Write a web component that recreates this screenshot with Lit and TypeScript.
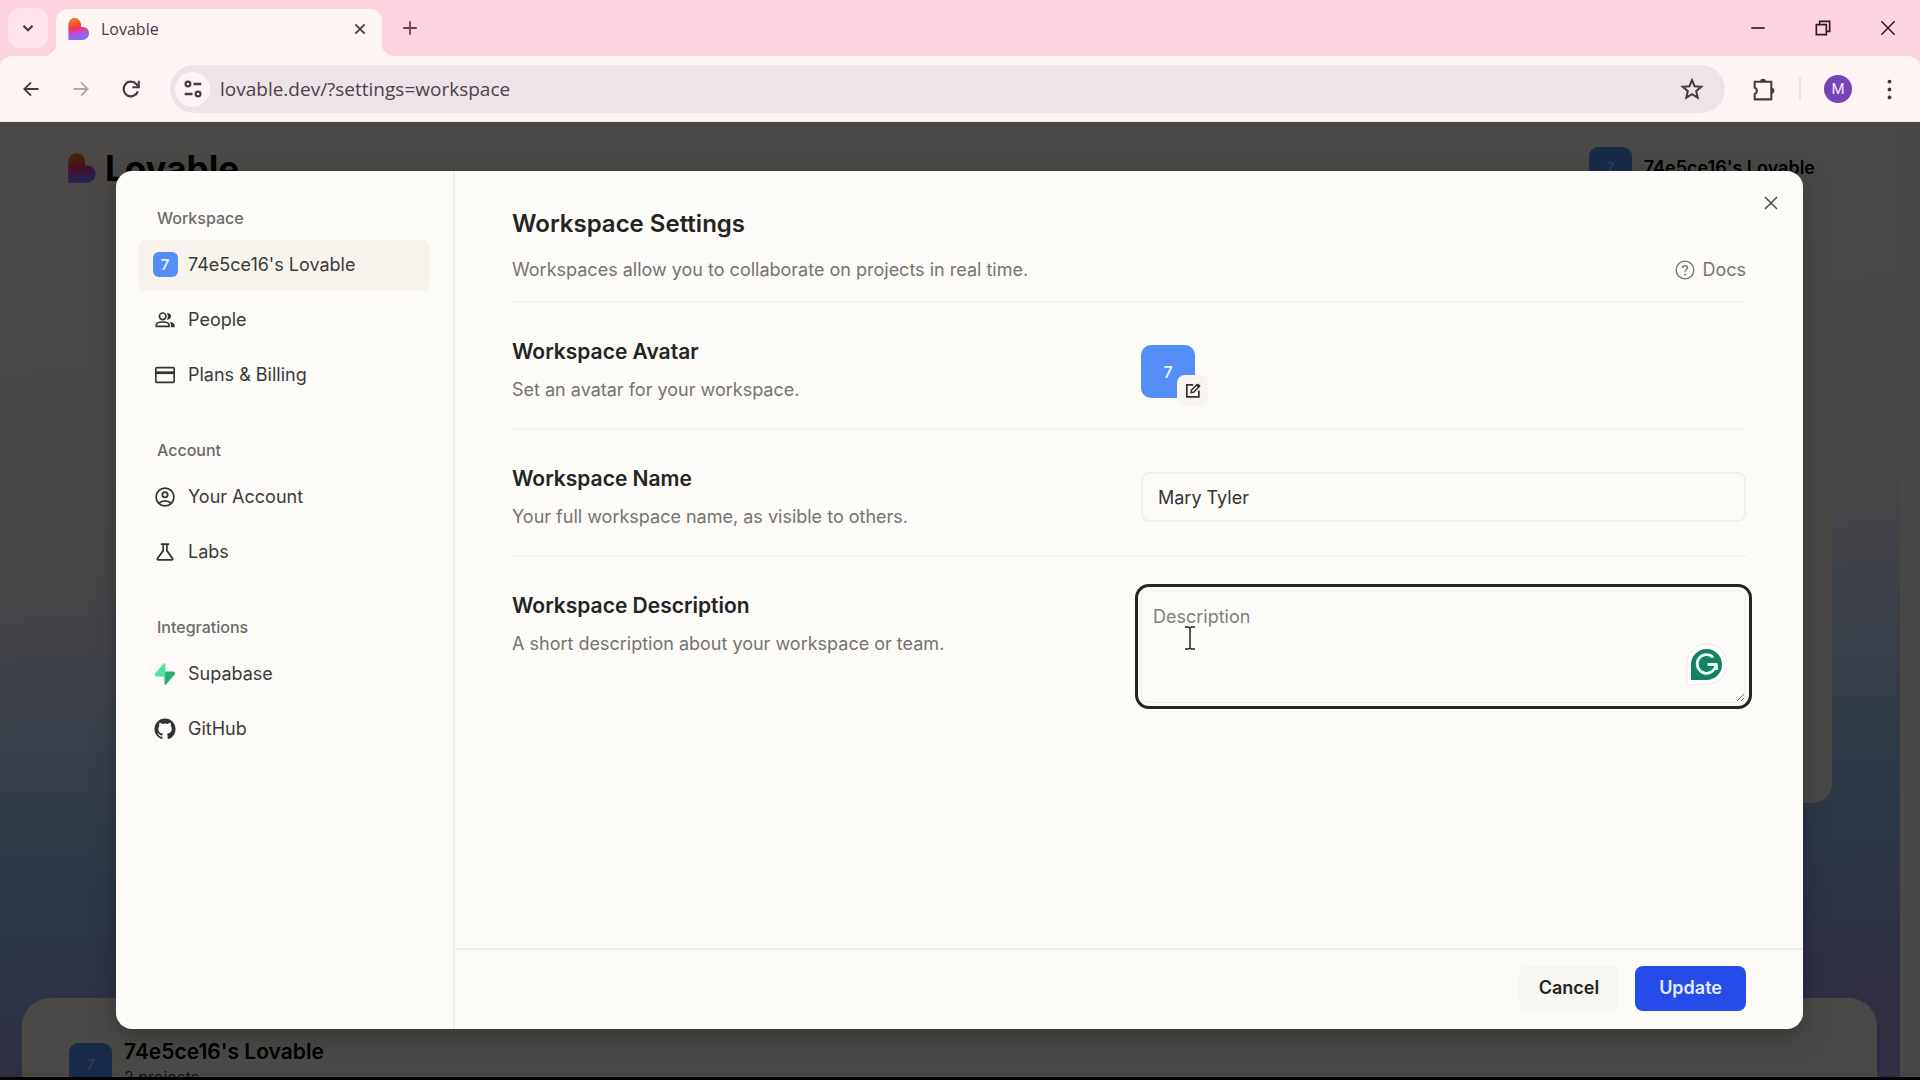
import { LitElement, html, css, svg, type TemplateResult } from "lit";
import { customElement, property, state } from "lit/decorators.js";
import { classMap } from "lit/directives/class-map.js";

type Glyph = TemplateResult;

const icon = (size: number, body: Glyph, box = 24, cls = "") => html`
  <svg class="icon ${cls}" width=${size} height=${size} viewBox="0 0 ${box} ${box}" aria-hidden="true"
    fill="none" stroke="currentColor" stroke-width="2">${body}</svg>`;

const glyphs: Record<string, Glyph> = {
  chevron: svg`<path d="M6 9l6 6 6-6" stroke-width="3"/>`,
  plus: svg`<path d="M12 3v18M3 12h18" stroke-width="2.400"/>`,
  minimise: svg`<path d="M4 12h16"/>`,
  restore: svg`<path d="M4 8h12v12H4zM8 8V4h12v12h-4" stroke-width="2"/>`,
  back: svg`<path d="M21 12H4M12 4l-8 8 8 8" stroke-width="2.2"/>`,
  forward: svg`<path d="M3 12h17M12 4l8 8-8 8" stroke-width="2.2"/>`,
  reload: svg`<path d="M19.500 14.500A8 8 0 1 1 18 6.800L20 9" stroke-width="2.400"/><path d="M20.500 3v7h-7" stroke-width="2.200"/>`,
  tune: svg`<circle cx="6.500" cy="6.500" r="2.600" stroke-width="2.400"/><path d="M12.500 6.500H21M3 17.500h8.500" stroke-width="2.600"/><circle cx="17.500" cy="17.500" r="2.600" stroke-width="2.400"/>`,
  star: svg`<path d="M12 3.200l2.600 6 6.600.6-5 4.400 1.500 6.400L12 17.200l-5.700 3.400 1.500-6.400-5-4.400 6.600-.6z" stroke-width="2"/>`,
  puzzle: svg`<path d="M3.500 4.500H19.500v17h-16v-5.200c2.800-.8 2.800-5.200 0-6z" stroke-linejoin="round"/><path d="M8.700 4.500a2.900 2.900 0 0 1 5.800 0zM19.500 10.200a2.900 2.900 0 0 1 0 5.800z" fill="currentColor" stroke="none"/>`,
  dots: svg`<g fill="currentColor" stroke="none"><circle cx="12" cy="3" r="2.200"/><circle cx="12" cy="12" r="2.200"/><circle cx="12" cy="21" r="2.200"/></g>`,
  people: svg`<g stroke-width="1.800"><circle cx="9.500" cy="8" r="3.600"/><path d="M2.500 19v-1.500c0-2.200 3.500-3.300 7-3.300s7 1.100 7 3.300V19z"/></g><g fill="currentColor" stroke="none"><path d="M14 11.600c1.600-1.900 1.600-5.300 0-7.300 2.300-.4 4.500 1.300 4.500 3.700s-2.200 4-4.500 3.600zM17 13.800c3 .5 5.500 1.700 5.500 4V20h-4v-2.400c0-1.600-.5-2.800-1.500-3.800z"/></g>`,
  card: svg`<rect x="2" y="4" width="20" height="16" rx="1" stroke-width="1.800"/><path d="M2 9.500h20" stroke-width="3"/>`,
  account: svg`<g stroke-width="1.900"><circle cx="12" cy="12" r="9.700"/><circle cx="12" cy="9.500" r="2.900"/><path d="M5.500 18.800c3.500-3.400 9.500-3.400 13 0"/></g>`,
  flask: svg`<path d="M7.500 3.500h9M10 3.500v7L3.800 19q-.8 1.500 1 1.500h14.400q1.800 0 1-1.500L14 10.500v-7" stroke-width="1.900"/>`,
  supabase: svg`<g stroke="none"><path d="M13.200 23.400c-.6.700-1.800.3-1.800-.7V9.300h9.600c1.700 0 2.700 2 1.600 3.300z" fill="#2fae74"/><path d="M10.700.6c.6-.7 1.800-.3 1.800.7v13.500H3c-1.700 0-2.700-2-1.600-3.300z" fill="#4de59c"/></g>`,
  github: svg`<path stroke="none" fill="currentColor" d="M12 .5C5.650.5.500 5.650.500 12c0 5.080 3.290 9.390 7.860 10.910.58.110.79-.25.79-.55v-2.100c-3.200.7-3.870-1.360-3.870-1.360-.52-1.330-1.280-1.680-1.280-1.680-1.050-.71.080-.7.080-.7 1.160.080 1.770 1.190 1.770 1.190 1.030 1.760 2.700 1.250 3.360.96.100-.75.400-1.250.73-1.540-2.550-.29-5.240-1.280-5.240-5.680 0-1.260.45-2.280 1.180-3.090-.12-.29-.51-1.460.11-3.040 0 0 .97-.31 3.160 1.180a11 11 0 0 1 5.760 0c2.200-1.490 3.160-1.180 3.160-1.180.63 1.580.23 2.750.11 3.040.74.810 1.180 1.830 1.180 3.090 0 4.420-2.690 5.390-5.260 5.670.41.360.78 1.060.78 2.140v3.170c0 .31.210.67.800.55A11.500 11.500 0 0 0 23.500 12C23.500 5.650 18.350.5 12 .5z"/>`,
  help: svg`<circle cx="12" cy="12" r="10.600" stroke-width="1.600"/><path d="M9 9.700c0-4 6-3.800 6-.3 0 2.300-3 2.300-3 4.800" stroke-width="1.700"/><circle cx="12" cy="17.400" r="1.200" fill="currentColor" stroke="none"/>`,
  edit: svg`<path d="M13 4H4v17h17v-9" stroke-width="2.400"/><path d="M10 15l.5-3.500L18 4l3 3-7.500 7.500z" stroke-width="2"/><path d="M17 5l3-3 3.500 3.500-3 3z" fill="currentColor" stroke="none"/>`,
};

const HEART = "M2 8.500C2 3.800 5 1 8.600 1S15.200 4 15.200 8v2.500h1.600c4 0 6.700 2.800 6.700 6.500S20.500 24 16.500 24H2z";
const heart = (size: number, id: string) => html`
  <svg class="icon" width=${size} height=${size} viewBox="0 0 24 25" aria-hidden="true">
    <defs><linearGradient id=${id} x1="0.300" y1="0" x2="0.450" y2="1">
      <stop offset="0.120" stop-color="#f5701f"/><stop offset="0.450" stop-color="#f0344f"/>
      <stop offset="0.680" stop-color="#c34bd0"/><stop offset="0.900" stop-color="#7e70fb"/>
    </linearGradient></defs>
    <path d=${HEART} fill="url(#${id})"/>
  </svg>`;

const reset = css`
  * { box-sizing: border-box; }
  button { font: inherit; color: inherit; background: none; border: 0; padding: 0; cursor: pointer; }
  a { color: inherit; text-decoration: none; }
  h1, h2, p, ul { margin: 0; padding: 0; }
  ul { list-style: none; }
  .icon { display: block; flex: none; }
`;

@customElement("browser-bar")
class BrowserBar extends LitElement {
  static styles = [reset, css`
    :host { display: block; background: #fcd3df; color: #453a40; font: 16px/24px "Open Sans", sans-serif; }
    .tabs { display: flex; align-items: stretch; height: 56px; padding-left: 8px; }
    .search { align-self: center; display: grid; place-items: center; width: 40px; height: 40px; border-radius: 12px; background: #fde5eb; }
    .tab { display: flex; align-items: center; gap: 11px; position: relative; width: 326px; margin: 9px 0 0 8px; padding: 0 15px 7px 10px; border-radius: 12px 12px 0 0; background: #fff5f5; }
    .tab::before, .tab::after { content: ""; position: absolute; bottom: 0; width: 12px; height: 12px; }
    .tab::before { right: 100%; background: radial-gradient(circle at 0 0, transparent 12px, #fff5f5 12px); }
    .tab::after { left: 100%; background: radial-gradient(circle at 100% 0, transparent 12px, #fff5f5 12px); }
    .name { flex: 1; }
    .new { display: grid; place-items: center; width: 56px; color: #6b3e4b; }
    .window { display: flex; margin-left: auto; color: #2b1a20; }
    .window button { display: grid; place-items: center; width: 65px; }
    .tools { display: flex; align-items: center; height: 66px; padding: 1px 6px 0 6px; background: #fff5f5; border-radius: 12px 12px 0 0; border-bottom: 1px solid #f3e6e8; }
    .tool { display: grid; place-items: center; width: 50px; height: 40px; }
    .off { color: #b3a7ab; }
    .address { flex: 1; display: flex; align-items: center; gap: 10px; height: 48px; margin: 0 13px 0 14px; padding: 0 8px 0 5px; border-radius: 24px; background: #efe3ea; }
    .site { display: grid; place-items: center; width: 35px; height: 35px; border-radius: 50%; background: #fcf4f7; }
    .url { flex: 1; min-width: 0; border: 0; padding: 0; background: none; outline: 0; font: 19px/28px "Open Sans", sans-serif; color: #4c4147; }
    .rule { width: 2px; height: 24px; margin: 0 11px; background: #fbdde4; }
    .profile { display: grid; place-items: center; width: 28px; height: 28px; margin: 0 12px; border-radius: 50%; background: #7544b8; color: #f3e9ff; font: 15px/28px Roboto, sans-serif; }
  `];
  render() {
    return html`
      <div class="tabs">
        <button class="search" aria-label="Search tabs">${icon(18, glyphs.chevron)}</button>
        <div class="tab">
          ${heart(24, "tab-heart")}
          <span class="name">Lovable</span>
          <button aria-label="Close tab">${icon(14, svg`<path d="M4 4l16 16M20 4L4 20" stroke-width="3"/>`)}</button>
        </div>
        <button class="new" aria-label="New tab">${icon(18, glyphs.plus)}</button>
        <div class="window">
          <button aria-label="Minimise">${icon(20, glyphs.minimise)}</button>
          <button aria-label="Restore">${icon(20, glyphs.restore)}</button>
          <button aria-label="Close">${icon(20, svg`<path d="M4 4l16 16M20 4L4 20" stroke-width="1.800"/>`)}</button>
        </div>
      </div>
      <div class="tools">
        <button class="tool" aria-label="Back">${icon(20, glyphs.back)}</button>
        <button class="tool off" aria-label="Forward">${icon(20, glyphs.forward)}</button>
        <button class="tool" aria-label="Reload">${icon(22, glyphs.reload)}</button>
        <div class="address">
          <button class="site" aria-label="Site information">${icon(22, glyphs.tune)}</button>
          <input class="url" aria-label="Address" .value=${"lovable.dev/?settings=workspace"} />
          <button class="tool" aria-label="Bookmark">${icon(24, glyphs.star)}</button>
        </div>
        <button class="tool" aria-label="Extensions">${icon(25, glyphs.puzzle)}</button>
        <span class="rule"></span>
        <button class="profile" aria-label="Profile">M</button>
        <button class="tool" aria-label="Menu">${icon(21, glyphs.dots)}</button>
      </div>`;
  }
}

@customElement("team-avatar")
class TeamAvatar extends LitElement {
  @property({ reflect: true }) size = "small";
  static styles = css`
    :host { display: grid; place-items: center; flex: none; width: 25px; height: 25px; border-radius: 6px; background: #558df6; color: #e6f1ff; font: 600 15px/20px Inter, sans-serif; }
    :host([size="medium"]) { width: 43px; height: 43px; border-radius: 9px; color: #bcd4ff; font-weight: 400; }
    :host([size="large"]) { width: 54px; height: 53px; border-radius: 10px; font-size: 16px; }
  `;
  render() { return html`<span>7</span>`; }
}

@customElement("home-page")
class HomePage extends LitElement {
  static styles = [reset, css`
    :host { display: block; overflow: hidden; padding-right: 20px; background: #f8f2ec; color: #000; font: 600 18px/26px Inter, sans-serif; }
    .canvas { display: flex; flex-direction: column; height: 100%; background: linear-gradient(177deg, #faf5f0 0, #f6f2ee 36%, #eceaf0 44%, #d3dbf8 53%, #b2cff2 62%, #96c0ea 70%, #93aee8 81%, #9d9de0 90%, #a998d8 95%, #9f9be6 100%); }
    header { display: flex; flex: none; align-items: center; justify-content: space-between; height: 92px; padding: 0 85px 0 65px; }
    .brand { display: flex; align-items: center; gap: 8px; font: 700 35px/40px Inter, sans-serif; }
    .team { display: flex; align-items: center; gap: 12px; }
    .prompt { align-self: flex-end; flex: none; width: 70%; height: 563px; margin: 26px 68px 195px 0; border-radius: 20px; background: #f6f1e9; }
    .projects { display: flex; align-items: flex-start; gap: 12px; flex: 1; min-height: 0; margin: 0 23px 0 22px; padding: 41px 47px 0; border-radius: 28px 28px 0 0; background: #f8f5ed; }
    h2 { font: 600 21px/26px Inter, sans-serif; }
    p { font: 400 16px/24px Inter, sans-serif; color: #444; }
    .avatar { margin-top: 4px; }
  `];
  render() {
    return html`
      <div class="canvas">
        <header>
          <div class="brand">${heart(32, "page-heart")}<span>Lovable</span></div>
          <div class="team"><team-avatar size="medium"></team-avatar><span>74e5ce16's Lovable</span></div>
        </header>
        <section class="prompt"></section>
        <section class="projects">
          <team-avatar class="avatar" size="medium"></team-avatar>
          <div><h2>74e5ce16's Lovable</h2><p>2 projects</p></div>
        </section>
      </div>`;
  }
}

interface Item { label: string; icon: string; }

@customElement("settings-dialog")
class SettingsDialog extends LitElement {
  @state() private current = "74e5ce16's Lovable";
  private groups: { title: string; items: Item[] }[] = [
    { title: "Workspace", items: [{ label: "74e5ce16's Lovable", icon: "team" }, { label: "People", icon: "people" }, { label: "Plans & Billing", icon: "card" }] },
    { title: "Account", items: [{ label: "Your Account", icon: "account" }, { label: "Labs", icon: "flask" }] },
    { title: "Integrations", items: [{ label: "Supabase", icon: "supabase" }, { label: "GitHub", icon: "github" }] },
  ];
  static styles = [reset, css`
    :host { display: grid; grid-template-columns: 339px minmax(0, 1fr); position: relative; overflow: hidden; border-radius: 16px; background: #fcfbf8; color: #242424; font: 400 18px/26px Inter, sans-serif; }
    nav { display: flex; flex-direction: column; gap: 37px; padding: 35px 23px 0 22px; border-right: 2px solid #f1efec; }
    .group { padding: 0 19px 10px; font: 500 16px/24px Inter, sans-serif; color: #6c6b68; }
    ul { display: flex; flex-direction: column; gap: 4px; }
    .item { display: flex; align-items: center; gap: 10px; height: 51px; padding: 0 14px 2px; border-radius: 8px; color: #3a3a39; }
    .item.on { background: #f7f4ed; }
    .slot { display: grid; place-items: center; width: 26px; color: #333; }
    .content { display: flex; flex-direction: column; min-width: 0; }
    .body { flex: 1; padding: 38px 57px 0; }
    .head { display: flex; justify-content: space-between; align-items: flex-end; padding-bottom: 18px; border-bottom: 2px solid #f4f2ef; }
    h1 { font: 600 24px/30px Inter, sans-serif; padding-bottom: 18px; }
    h2 { font: 600 21px/26px Inter, sans-serif; padding-bottom: 12px; }
    .muted, .docs { color: #757471; }
    .docs { display: flex; align-items: center; gap: 7px; }
    .row { display: grid; grid-template-columns: 1fr 1fr; gap: 24px; padding-top: 33px; border-bottom: 2px solid #f4f2ef; }
    .row:last-child { border: 0; }
    .text { padding: 3px 0 25px; }
    .control { padding-top: 9px; }
    .picture { position: relative; width: 54px; }
    .edit { position: absolute; left: 36px; top: 30px; display: grid; place-items: center; width: 31px; height: 31px; border-radius: 8px; background: #f8f5f1; color: #33312e; }
    .field { display: block; width: 100%; height: 50px; padding: 0 15px; border: 2px solid #f2f0ec; border-radius: 8px; background: #fcfbf8; color: #333; font: 400 18px/26px Inter, sans-serif; }
    .area { position: relative; }
    textarea { display: block; width: 100%; height: 113px; padding: 13px 11px; border: 1px solid #f0eeea; border-radius: 8px; outline: 3px solid #242424; outline-offset: 3px; background: #fcfbf8; font: 400 18px/26px Inter, sans-serif; resize: vertical; }
    textarea::placeholder { color: #80807e; opacity: 1; }
    .helper { position: absolute; right: 19px; bottom: 17px; }
    .pointer { position: absolute; left: 43px; top: 36px; }
    footer { display: flex; justify-content: flex-end; gap: 16px; padding: 16px 57px 18px; border-top: 2px solid #f1efec; font-weight: 600; }
    footer button { height: 45px; padding: 0 20px 2px; border-radius: 8px; background: #f8f6f1; }
    footer .primary { padding: 0 24px 2px; background: #254ce8; color: #e4ecff; }
    .close { position: absolute; top: 24px; right: 24px; color: #4b4a48; }
  `];
  render() {
    return html`
      <nav aria-label="Settings">
        ${this.groups.map((g) => html`
          <div>
            <div class="group">${g.title}</div>
            <ul>${g.items.map((i) => html`
              <li><a href="#" class=${classMap({ item: true, on: i.label === this.current })}
                @click=${(e: Event) => { e.preventDefault(); this.current = i.label; }}>
                <span class="slot">${i.icon === "team" ? html`<team-avatar></team-avatar>` : icon(22, glyphs[i.icon])}</span>
                <span>${i.label}</span></a></li>`)}
            </ul>
          </div>`)}
      </nav>
      <div class="content">
        <div class="body">
          <div class="head">
            <div><h1>Workspace Settings</h1><p class="muted">Workspaces allow you to collaborate on projects in real time.</p></div>
            <a class="docs" href="#">${icon(20, glyphs.help)}<span>Docs</span></a>
          </div>
          <section class="row">
            <div class="text"><h2>Workspace Avatar</h2><p class="muted">Set an avatar for your workspace.</p></div>
            <div class="control"><div class="picture">
              <team-avatar size="large"></team-avatar>
              <button class="edit" aria-label="Edit avatar">${icon(17, glyphs.edit)}</button>
            </div></div>
          </section>
          <section class="row">
            <div class="text"><h2><label for="name">Workspace Name</label></h2><p class="muted">Your full workspace name, as visible to others.</p></div>
            <div class="control"><input id="name" class="field" .value=${"Mary Tyler"} /></div>
          </section>
          <section class="row">
            <div class="text"><h2><label for="description">Workspace Description</label></h2><p class="muted">A short description about your workspace or team.</p></div>
            <div class="area">
              <textarea id="description" placeholder="Description"></textarea>
              <svg class="helper" width="41" height="43" viewBox="0 0 41 43" aria-hidden="true">
                <path d="M1 42V21A20 20 0 1 1 21 41z" fill="#fff" stroke="#ebe8ea"/>
                <path d="M5 37V21A15.500 15.500 0 1 1 20.500 37z" fill="#128263"/>
                <path d="M27.200 14.500A9.300 9.300 0 1 0 29.800 21.500H21.500M30.500 21.500V27" fill="none" stroke="#e9fff8" stroke-width="2.800"/>
              </svg>
              <svg class="pointer" width="12" height="24" viewBox="0 0 12 24" aria-hidden="true">
                <path d="M1 1h3.500L6 2l1.500-1H11M6 2v20M1 23h3.500L6 22l1.500 1H11" fill="none" stroke="#222" stroke-width="1.500"/>
              </svg>
            </div>
          </section>
        </div>
        <footer><button>Cancel</button><button class="primary">Update</button></footer>
      </div>
      <button class="close" aria-label="Close settings">${icon(16, svg`<path d="M3 3l18 18M21 3L3 21" stroke-width="2.200"/>`)}</button>`;
  }
}

@customElement("app-root")
class AppRoot extends LitElement {
  static styles = css`
    :host { display: flex; flex-direction: column; height: 100vh; }
    main { flex: 1; min-height: 0; display: grid; grid-template: minmax(0, 1fr) / minmax(0, 1fr); border-bottom: 3px solid #000; }
    home-page, .veil { grid-area: 1 / 1; }
    .veil { display: grid; padding: 49px 117px 48px 116px; background: rgba(0, 0, 0, 0.7); z-index: 1; }
    settings-dialog { box-shadow: 0 8px 24px rgba(0, 0, 0, 0.25); }
  `;
  render() {
    return html`
      <browser-bar></browser-bar>
      <main>
        <home-page></home-page>
        <div class="veil"><settings-dialog role="dialog" aria-label="Workspace Settings"></settings-dialog></div>
      </main>`;
  }
}
